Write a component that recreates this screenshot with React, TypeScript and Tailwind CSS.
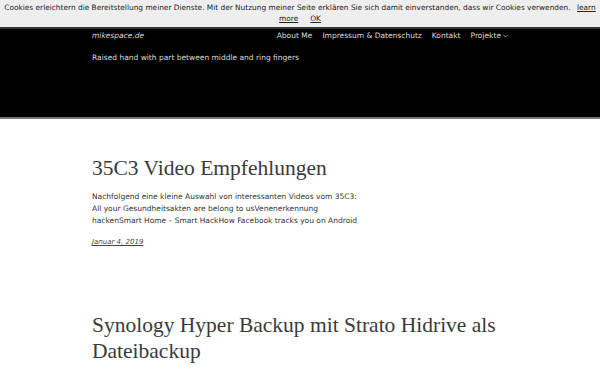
import React from 'react';

const sans = { fontFamily: '"DejaVu Sans", sans-serif' };
const serif = { fontFamily: '"Liberation Serif", serif' };

export default function App() {
  const nav = ['About Me', 'Impressum & Datenschutz', 'Kontakt'];

  return (
    <div className="min-h-screen bg-white" style={sans}>
      {/* cookie notice */}
      <div className="bg-[#eeeeee] border-b-2 border-[#333] pt-[2px] pb-[3px] text-center text-[7.4px] leading-[11px] text-[#222]">
        Cookies erleichtern die Bereitstellung meiner Dienste. Mit der Nutzung meiner Seite erklären Sie sich damit
        einverstanden, dass wir Cookies verwenden.{' '}
        <a className="underline ml-1">learn more</a>
        <a className="underline ml-3">OK</a>
      </div>

      {/* site header */}
      <header className="bg-black h-[90px] border-b-2 border-[#777]">
        <div className="w-[416px] mx-auto pt-[1px]">
          <div className="flex items-center justify-between">
            <span className="italic text-[7.5px] text-[#ddd]">mikespace.de</span>
            <nav className="flex items-center gap-[10px] text-[7.5px] text-[#ddd]">
              {nav.map((n) => (
                <span key={n}>{n}</span>
              ))}
              <span className="flex items-center gap-[2px]">
                Projekte
                <svg width="5" height="4" viewBox="0 0 10 6" fill="none" stroke="#ccc" strokeWidth="1.5">
                  <path d="M1 1l4 4 4-4" />
                </svg>
              </span>
            </nav>
          </div>
          <p className="mt-[11px] text-[7.5px] text-[#ddd]">Raised hand with part between middle and ring fingers</p>
        </div>
      </header>

      <main className="w-[416px] mx-auto">
        <article className="pt-[36px]">
          <h2 className="text-[21.5px] leading-[26px] text-[#3a3a3a]" style={serif}>
            35C3 Video Empfehlungen
          </h2>
          <div className="mt-[10px] text-[7.5px] leading-[12px] text-[#333]">
            <p>Nachfolgend eine kleine Auswahl von interessanten Videos vom 35C3:</p>
            <p>All your Gesundheitsakten are belong to usVenenerkennung</p>
            <p>hackenSmart Home – Smart HackHow Facebook tracks you on Android</p>
          </div>
          <p className="mt-[10px] text-[7px] italic underline text-[#444]">Januar 4, 2019</p>
        </article>

        <article className="pt-[64px]">
          <h2 className="text-[21.5px] leading-[26px] text-[#3a3a3a]" style={serif}>
            Synology Hyper Backup mit Strato Hidrive als Dateibackup
          </h2>
        </article>
      </main>
    </div>
  );
}
